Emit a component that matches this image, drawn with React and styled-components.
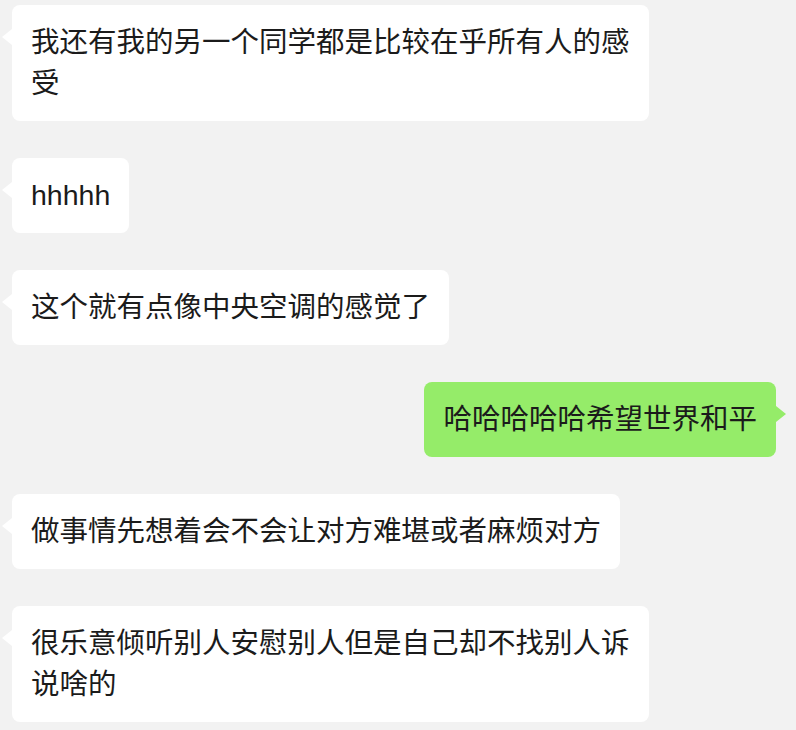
import React from "react";
import styled, { createGlobalStyle } from "styled-components";

const Global = createGlobalStyle`
  html, body { margin: 0; padding: 0; background: #f2f2f2; }
  body { font-family: "Liberation Sans", "Noto Sans CJK SC", sans-serif; }
`;

const Chat = styled.div`
  display: flex;
  flex-direction: column;
  gap: 37px;
  padding: 5px 20px 8px 12px;
  width: 796px;
  height: 730px;
  box-sizing: border-box;
  overflow: hidden;
`;

const Row = styled.div`
  display: flex;
  justify-content: ${(p) => (p.$mine ? "flex-end" : "flex-start")};
`;

const Bubble = styled.div`
  position: relative;
  box-sizing: border-box;
  max-width: 637px;
  padding: 17px 19px;
  border-radius: 8px;
  background: ${(p) => (p.$mine ? "#95ec69" : "#ffffff")};
  color: #1b1b1b;
  font-size: 28.5px;
  line-height: 41px;
  word-break: break-all;

  &::before {
    content: "";
    position: absolute;
    top: 24px;
    width: 0;
    height: 0;
    border-top: 8px solid transparent;
    border-bottom: 8px solid transparent;
    ${(p) =>
      p.$mine
        ? `right: -10px; border-left: 10px solid #95ec69;`
        : `left: -10px; border-right: 10px solid #ffffff;`}
  }
`;

const messages = [
  { text: "我还有我的另一个同学都是比较在乎所有人的感受" },
  { text: "hhhhh" },
  { text: "这个就有点像中央空调的感觉了" },
  { text: "哈哈哈哈哈希望世界和平", mine: true },
  { text: "做事情先想着会不会让对方难堪或者麻烦对方" },
  { text: "很乐意倾听别人安慰别人但是自己却不找别人诉说啥的" },
];

export default function App() {
  return (
    <>
      <Global />
      <Chat>
        {messages.map((m, i) => (
          <Row key={i} $mine={m.mine}>
            <Bubble $mine={m.mine}>{m.text}</Bubble>
          </Row>
        ))}
      </Chat>
    </>
  );
}
